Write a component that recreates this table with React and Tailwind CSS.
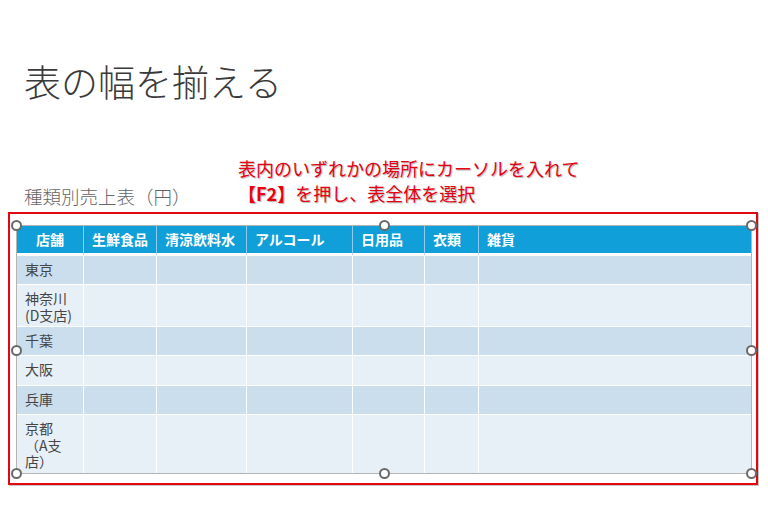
import React from "react";

const cols = [67, 73, 90, 106, 72, 54, 272];
const headers = ["店舗", "生鮮食品", "清涼飲料水", "アルコール", "日用品", "衣類", "雑貨"];
const rows = [
  { name: ["東京"], h: 29, dark: true },
  { name: ["神奈川", "(D支店)"], h: 42, dark: false },
  { name: ["千葉"], h: 29, dark: true },
  { name: ["大阪"], h: 30, dark: false },
  { name: ["兵庫"], h: 29, dark: true },
  { name: ["京都", "（A支", "店）"], h: 58, dark: false },
];

function Handle({ className }) {
  return (
    <div
      className={
        "absolute w-[11px] h-[11px] rounded-full border-2 border-[#6a6a6a] bg-white " +
        className
      }
    />
  );
}

export default function App() {
  const font = { fontFamily: '"Noto Sans CJK JP", "Noto Sans", sans-serif' };
  return (
    <div className="w-[768px] h-[508px] bg-white overflow-hidden" style={font}>
      <div className="pt-[56px] pl-[24px] text-[37px] leading-[50px] font-light text-[#3a3a3a]">
        表の幅を揃える
      </div>
      <div className="flex items-end mt-[52px] h-[50px]">
        <div className="w-[238px] pl-[24px] text-[18.5px] leading-[24px] text-[#666] font-light">
          種類別売上表（円）
        </div>
        <div className="text-[18px] leading-[25px] text-[#e60012] [text-shadow:1px_1px_1px_rgba(0,0,0,0.3)] -translate-y-[2px]">
          <div>表内のいずれかの場所にカーソルを入れて</div>
          <div>
            <span className="font-bold">【F2】</span>を押し、表全体を選択
          </div>
        </div>
      </div>
      <div className="ml-[8px] mt-[4px] w-[750px] h-[273px] border-2 border-[#e30613] shadow-[1px_1px_0_#c8c8c8] pl-[6px] pt-[11px]">
        <div className="relative w-[736px] border border-[#b4b4b4]">
          <div className="flex bg-[#109fd8] h-[30px]">
            {headers.map((t, i) => (
              <div
                key={t}
                style={{ width: cols[i] }}
                className={
                  "h-full border-b-[3px] border-white flex items-center text-white font-bold text-[14px] " +
                  (i < 6 ? "border-r border-r-[#8fcbec] " : "") +
                  (i === 0 ? "justify-center" : "pl-[8px]")
                }
              >
                {t}
              </div>
            ))}
          </div>
          {rows.map((r, ri) => (
            <div
              key={ri}
              className={"flex " + (r.dark ? "bg-[#cbdeee]" : "bg-[#e7eff7]")}
              style={{ height: r.h }}
            >
              {cols.map((w, ci) => (
                <div
                  key={ci}
                  style={{ width: w }}
                  className={
                    "h-full border-white " +
                    (ri < rows.length - 1 ? "border-b " : "") +
                    (ci < 6 ? "border-r " : "")
                  }
                >
                  {ci === 0 && (
                    <div className="flex flex-col pl-[8px] pt-[5px] text-[14px] text-[#454545]">
                      {r.name.map((n, k) => (
                        <div key={k} className="h-[16.5px] leading-[16.5px] flex items-center">
                          <span className="leading-none">{n}</span>
                        </div>
                      ))}
                    </div>
                  )}
                </div>
              ))}
            </div>
          ))}
          <Handle className="-left-[6px] -top-[6px]" />
          <Handle className="left-[362px] -top-[6px]" />
          <Handle className="-right-[6px] -top-[6px]" />
          <Handle className="-left-[6px] top-[119px]" />
          <Handle className="-right-[6px] top-[119px]" />
          <Handle className="-left-[6px] -bottom-[6px]" />
          <Handle className="left-[362px] -bottom-[6px]" />
          <Handle className="-right-[6px] -bottom-[6px]" />
        </div>
      </div>
    </div>
  );
}
